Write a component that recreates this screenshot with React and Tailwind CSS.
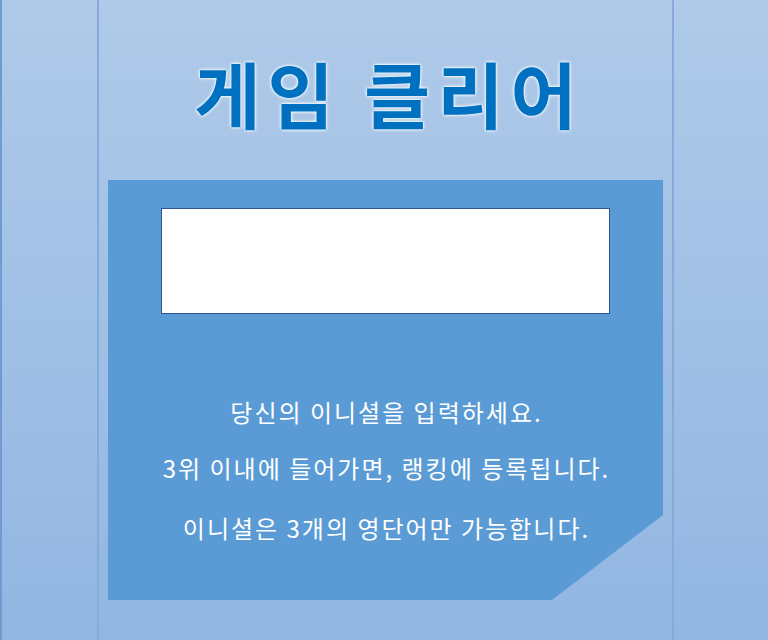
export default function App() {
  const lines = [
    { text: "당신의 이니셜을 입력하세요.", mt: "mt-0" },
    { text: "3위 이내에 들어가면, 랭킹에 등록됩니다.", mt: "mt-[28px]" },
    { text: "이니셜은 3개의 영단어만 가능합니다.", mt: "mt-[32px]" },
  ];

  return (
    <div
      className="h-[640px] w-[768px] flex bg-gradient-to-b from-[#afcae9] to-[#92b6e2] border-l-2 border-[#6f9bd1] overflow-hidden"
      style={{ fontFamily: '"Noto Sans CJK KR", "Noto Sans", sans-serif' }}
    >
      <div className="w-[95px] shrink-0" />
      <div className="w-[577px] shrink-0 border-x-2 border-[#86abda] h-full">
        <h1
          className="mt-[50px] h-[84px] pl-[7px] text-center text-[72px] leading-[84px] tracking-[7px] font-bold text-[#0070c0]"
          style={{ textShadow: "0 0 2px #ffffff, 0 0 3px #ffffff, 0 0 4px rgba(255,255,255,0.6)" }}
        >
          게임 클리어
        </h1>
        <div className="mt-[46px] ml-[9px] w-[555px] h-[420px] bg-[#5b9bd5] [clip-path:polygon(0_0,100%_0,100%_335px,444px_100%,0_100%)] pt-[28px]">
          <div className="mx-auto w-[449px] h-[106px] bg-white border border-[#2f5597]" />
          <div className="mt-[84px] pl-[2px] flex flex-col items-center text-white text-[24px] leading-[28px] tracking-[2px]">
            {lines.map((l) => (
              <p key={l.text} className={l.mt}>
                {l.text}
              </p>
            ))}
          </div>
        </div>
      </div>
      <div className="flex-1" />
    </div>
  );
}
